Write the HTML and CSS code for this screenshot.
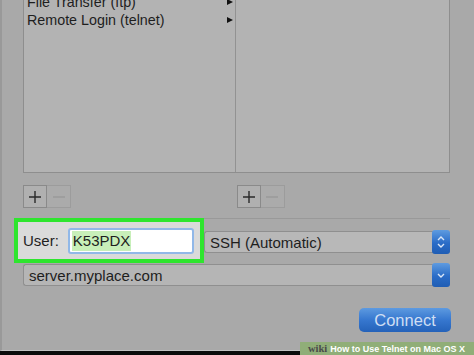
FILE: index.html
```html
<!DOCTYPE html>
<html lang="en">
<head>
    <meta charset="UTF-8">
    <title>New Remote Connection</title>
    <link rel="stylesheet" href="styles.css">
</head>
<body>
    <div class="window">
        <div class="browser">
            <div class="col-left">
                <ul class="services">
                    <li class="service">File Transfer (ftp)<span class="arrow"></span></li>
                    <li class="service">Remote Login (telnet)<span class="arrow"></span></li>
                </ul>
            </div>
            <div class="col-right"></div>
        </div>

        <div class="tools">
            <div class="tool-cell">
                <div class="sq-btn">
                    <svg width="14" height="14" viewBox="0 0 14 14"><path d="M7 1v12M1 7h12" stroke="#2a2a2a" stroke-width="1.4"/></svg>
                </div>
                <div class="sq-btn faded">
                    <svg width="14" height="14" viewBox="0 0 14 14"><path d="M1 7h12" stroke="#999" stroke-width="1.4"/></svg>
                </div>
            </div>
            <div class="tool-cell">
                <div class="sq-btn">
                    <svg width="14" height="14" viewBox="0 0 14 14"><path d="M7 1v12M1 7h12" stroke="#2a2a2a" stroke-width="1.4"/></svg>
                </div>
                <div class="sq-btn faded">
                    <svg width="14" height="14" viewBox="0 0 14 14"><path d="M1 7h12" stroke="#999" stroke-width="1.4"/></svg>
                </div>
            </div>
        </div>

        <div class="user-row">
            <div class="highlight">
                <span class="label">User:</span>
                <div class="text-input"><span class="selected">K53PDX</span></div>
            </div>
            <div class="proto-cell">
                <div class="select">
                    <span class="select-text">SSH (Automatic)</span>
                    <span class="blue-btn">
                        <svg width="10" height="14" viewBox="0 0 10 14"><path d="M2 5l3-3 3 3M2 9l3 3 3-3" fill="none" stroke="#dbe7f7" stroke-width="1.4"/></svg>
                    </span>
                </div>
            </div>
        </div>

        <div class="select server">
            <span class="select-text">server.myplace.com</span>
            <span class="blue-btn">
                <svg width="10" height="10" viewBox="0 0 10 10"><path d="M2 4l3 3 3-3" fill="none" stroke="#dbe7f7" stroke-width="1.4"/></svg>
            </span>
        </div>

        <div class="actions">
            <div class="connect">Connect</div>
        </div>
    </div>

    <div class="banner"><span class="wiki">wiki</span>How to Use Telnet on Mac OS X</div>
</body>
</html>
```

FILE: styles.css
```css
body {
    margin: 0;
    width: 474px;
    height: 355px;
    overflow: hidden;
    background-color: #0c0c0c;
    font-family: "Liberation Sans", Arial, sans-serif;
    color: #1e1e1e;
    position: relative;
}
.window {
    box-sizing: border-box;
    height: 351px;
    background-color: #a9a9a9;
    border-left: 2px solid #999999;
    border-bottom: 1px solid #c2c2c2;
    padding: 0 24px 0 21px;

    display: flex;
    flex-direction: column;
}
.browser {
    height: 172px;
    display: flex;
    background-color: #b3b3b3;
    border-left: 1px solid #8e8e8e;
    border-right: 1px solid #8e8e8e;
    border-bottom: 1px solid #8e8e8e;
    overflow: hidden;
}
.col-left {
    width: 211px;
    border-right: 1px solid #929292;
}
.col-right {
    flex: 1;
}
.services {
    list-style: none;
    margin: -7px 0 0 0;
    padding: 0;
}
.service {
    height: 18px;
    line-height: 18px;
    font-size: 14.3px;
    padding: 0 2px 0 3px;

    display: flex;
    justify-content: space-between;
    align-items: center;
}
.arrow {
    width: 0;
    height: 0;
    border-left: 6px solid #111;
    border-top: 3px solid transparent;
    border-bottom: 3px solid transparent;
}
.tools {
    display: flex;
    margin-top: 12px;
    height: 23px;
}
.tool-cell {
    width: 214px;
    display: flex;
}
.sq-btn {
    box-sizing: border-box;
    width: 24px;
    height: 23px;
    border: 1px solid #8a8a8a;
    background-color: #b0b0b0;

    display: flex;
    justify-content: center;
    align-items: center;
}
.sq-btn.faded {
    border-color: #9c9c9c;
    border-left: none;
    background-color: #ababab;
}
.user-row {
    display: flex;
    margin: 10px 0 0 -9px;
    height: 45px;
}
.highlight {
    box-sizing: border-box;
    width: 190px;
    border: 4px solid #2ee52e;
    background-color: #dadada;
    padding-left: 5px;

    display: flex;
    align-items: center;
}
.label {
    font-size: 15px;
    margin-right: 9px;
}
.text-input {
    box-sizing: border-box;
    width: 126px;
    height: 26px;
    background-color: #fff;
    border: 2px solid #91b8e8;
    border-radius: 3px;
    padding: 1px 2px;
    font-size: 15px;

    display: flex;
    align-items: center;
}
.selected {
    background-color: #c8efb9;
    line-height: 20px;
    padding: 0 1px;
}
.proto-cell {
    flex: 1;
    border-top: 1px solid #999;
    padding-top: 12px;
}
.select {
    box-sizing: border-box;
    height: 22px;
    background-color: #b8b8b8;
    border: 1px solid #8f8f8f;
    border-right: none;
    border-radius: 3px;
    font-size: 15px;

    display: flex;
    align-items: center;
    justify-content: space-between;
}
.select-text {
    padding-left: 5px;
}
.server {
    margin-top: 1px;
    background-color: #b5b5b5;
}
.blue-btn {
    width: 18px;
    height: 24px;
    margin: -1px 0;
    border-radius: 3px;
    background: linear-gradient(#5e9be0, #2a6cc7 55%, #1f5db4);

    display: flex;
    justify-content: center;
    align-items: center;
}
.actions {
    display: flex;
    justify-content: flex-end;
    margin-top: 22px;
}
.connect {
    width: 92px;
    height: 24px;
    margin-right: -1px;
    border-radius: 5px;
    background: linear-gradient(#5d9ae0, #3677cf 50%, #2462b9);
    color: #cfdef3;
    font-size: 16.5px;
    line-height: 24px;
    text-align: center;
}
.banner {
    position: absolute;
    right: 0;
    bottom: 0;
    width: 166px;
    height: 13px;
    padding-left: 8px;
    background-color: #90ae78;
    color: #fff;
    font-size: 9px;
    font-weight: bold;
    line-height: 13px;
    white-space: nowrap;
}
.wiki {
    font-family: "Liberation Serif", serif;
    font-size: 10.5px;
    color: #4a4a4a;
    margin-right: 3px;
}
```
